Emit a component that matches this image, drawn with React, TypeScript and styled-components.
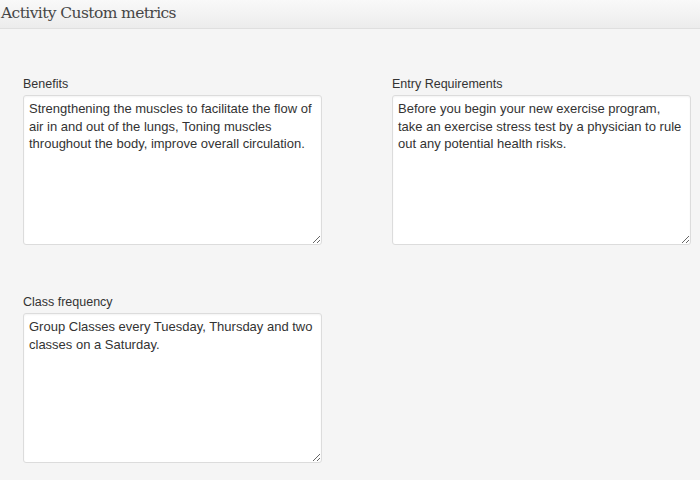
import React from "react";
import styled, { createGlobalStyle } from "styled-components";

const Global = createGlobalStyle`
  html, body { margin: 0; padding: 0; background: #f5f5f5; }
  body { width: 700px; height: 480px; overflow: hidden; }
`;

const Page = styled.div`
  width: 700px;
  height: 480px;
  background: #f5f5f5;
  display: flex;
  flex-direction: column;
`;

const Header = styled.div`
  height: 28px;
  border-bottom: 1px solid #dfdfdf;
  background: linear-gradient(to bottom, #f9f9f9, #ececec);
  display: flex;
  align-items: center;
  padding-left: 1px;
`;

const Title = styled.h3`
  margin: 0;
  font-family: "DejaVu Serif", Georgia, serif;
  font-weight: normal;
  font-size: 15.5px;
  color: #464646;
  margin-top: -3px;
  letter-spacing: -0.6px;
`;

const Grid = styled.div`
  display: grid;
  grid-template-columns: 299px 299px;
  column-gap: 70px;
  row-gap: 50px;
  padding: 48px 0 0 23px;
`;

const Field = styled.div`
  display: flex;
  flex-direction: column;
`;

const Label = styled.label`
  font-family: "Liberation Sans", Arial, sans-serif;
  font-size: 12.5px;
  color: #333;
  line-height: 14px;
  margin-bottom: 4px;
`;

const Area = styled.textarea`
  box-sizing: border-box;
  width: 299px;
  height: 150px;
  margin: 0;
  padding: 4px 5px;
  border: 1px solid #dcdcdc;
  border-radius: 3px;
  background: #fff;
  box-shadow: inset 0 1px 2px rgba(0, 0, 0, 0.05);
  font-family: "Liberation Sans", Arial, sans-serif;
  font-size: 13px;
  line-height: 17.5px;
  color: #333;
  outline: none;
  overflow: hidden;
`;

const fields = [
  {
    label: "Benefits",
    value:
      "Strengthening the muscles to facilitate the flow of air in and out of the lungs, Toning muscles throughout the body, improve overall circulation.",
  },
  {
    label: "Entry Requirements",
    value:
      "Before you begin your new exercise program, take an exercise stress test by a physician to rule out any potential health risks.",
  },
  {
    label: "Class frequency",
    value: "Group Classes every Tuesday, Thursday and two classes on a Saturday.",
  },
];

export default function App() {
  return (
    <Page>
      <Global />
      <Header>
        <Title>Activity Custom metrics</Title>
      </Header>
      <Grid>
        {fields.map((f) => (
          <Field key={f.label}>
            <Label>{f.label}</Label>
            <Area readOnly value={f.value} />
          </Field>
        ))}
      </Grid>
    </Page>
  );
}
